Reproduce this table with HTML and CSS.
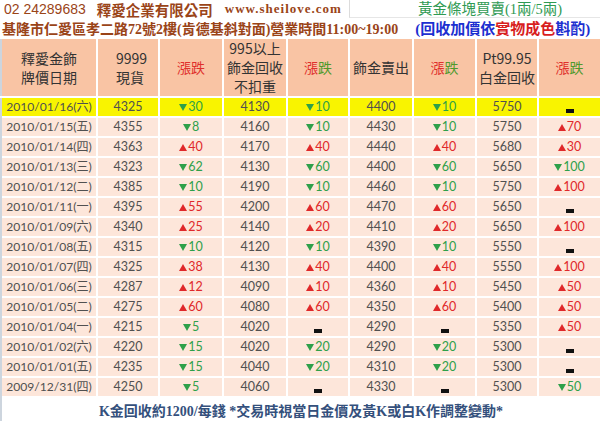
FILE: index.html
```html
<!DOCTYPE html>
<html lang="zh-Hant">
<head>
<meta charset="utf-8">
<title>釋愛企業有限公司 黃金牌價</title>
<link rel="stylesheet" href="styles.css">
</head>
<body>
<div class="page">
  <div class="line1">
    <div class="brand">
      <span class="phone">02 24289683</span>
      <span class="company">釋愛企業有限公司</span>
      <span class="url">www.sheilove.com</span>
    </div>
    <div class="trade">黃金條塊買賣(1兩/5兩)</div>
  </div>
  <div class="line2">
    <span class="addr">基隆市仁愛區孝二路72號2樓(肯德基斜對面)營業時間11:00~19:00</span>
    <span class="note">(回收加價依<em class="red">實物成色</em>斟酌)</span>
  </div>

  <div class="board">
    <div class="h">釋愛金飾<br>牌價日期</div>
    <div class="h h-left">9999<br>現貨</div>
    <div class="h"><span class="up-t">漲跌</span></div>
    <div class="h">995以上<br>飾金回收<br>不扣重</div>
    <div class="h"><span class="up-t">漲</span><span class="dn-t">跌</span></div>
    <div class="h">飾金賣出</div>
    <div class="h"><span class="up-t">漲</span><span class="dn-t">跌</span></div>
    <div class="h">Pt99.95<br>白金回收</div>
    <div class="h"><span class="up-t">漲</span><span class="dn-t">跌</span></div>
  </div>
  <div class="board" id="rows"></div>

  <div class="foot">K金回收約1200/每錢 *交易時視當日金價及黃K或白K作調整變動*</div>
</div>
<script src="app.js"></script>
</body>
</html>
```

FILE: app.js
```js
var data = [
  ["2010/01/16(六)","4325","d30","4130","d10","4400","d10","5750","-"],
  ["2010/01/15(五)","4355","d8","4160","d10","4430","d10","5750","u70"],
  ["2010/01/14(四)","4363","u40","4170","u40","4440","u40","5680","u30"],
  ["2010/01/13(三)","4323","d62","4130","d60","4400","d60","5650","d100"],
  ["2010/01/12(二)","4385","d10","4190","d10","4460","d10","5750","u100"],
  ["2010/01/11(一)","4395","u55","4200","u60","4470","u60","5650","-"],
  ["2010/01/09(六)","4340","u25","4140","u20","4410","u20","5650","u100"],
  ["2010/01/08(五)","4315","d10","4120","d10","4390","d10","5550","-"],
  ["2010/01/07(四)","4325","u38","4130","u40","4400","u40","5550","u100"],
  ["2010/01/06(三)","4287","u12","4090","u10","4360","u10","5450","u50"],
  ["2010/01/05(二)","4275","u60","4080","u60","4350","u60","5400","u50"],
  ["2010/01/04(一)","4215","d5","4020","-","4290","-","5350","u50"],
  ["2010/01/02(六)","4220","d15","4020","d20","4290","d20","5300","-"],
  ["2010/01/01(五)","4235","d15","4040","d20","4310","d20","5300","-"],
  ["2009/12/31(四)","4250","d5","4060","-","4330","-","5300","d50"]
];
var host = document.getElementById("rows");
var html = "";
data.forEach(function (r, i) {
  var cls = i === 0 ? "c hl" : "c";
  r.forEach(function (v, j) {
    var inner;
    if (j === 0) {
      inner = '<span class="date">' + v + '</span>';
    } else if (j % 2 === 0) {
      if (v === "-") {
        inner = '<span class="dash"></span>';
      } else if (v.charAt(0) === "u") {
        inner = '<span class="up"><i class="tri-up"></i>' + v.slice(1) + '</span>';
      } else {
        inner = '<span class="dn"><i class="tri-dn"></i>' + v.slice(1) + '</span>';
      }
    } else {
      inner = v;
    }
    html += '<div class="' + cls + '">' + inner + '</div>';
  });
});
host.innerHTML = html;
```

FILE: styles.css
```css
html, body {
  margin: 0;
  padding: 0;
  background: #ffffff;
}

.page {
  width: 600px;
  height: 421px;
  overflow: hidden;
  font-family: "Liberation Sans", "Noto Sans CJK TC", sans-serif;
}

.line1 {
  display: flex;
  height: 18px;
}

.brand {
  width: 349px;
  display: flex;
  align-items: center;
  color: #9a4418;
  white-space: nowrap;
}

.phone {
  font-family: "Liberation Sans", sans-serif;
  font-size: 14px;
  margin-left: 4px;
}

.company {
  font-family: "Liberation Serif", "Noto Sans CJK TC", serif;
  font-weight: bold;
  font-size: 14.5px;
  margin-left: 11px;
}

.url {
  font-family: "Liberation Serif", serif;
  font-weight: bold;
  font-size: 13px;
  letter-spacing: 1px;
  margin-left: 12px;
}

.trade {
  flex: 1;
  border-left: 1px solid #dcdcdc;
  border-bottom: 1px solid #e6e6e6;
  color: #2f9a52;
  font-family: "Liberation Serif", "Noto Sans CJK TC", serif;
  font-size: 14.5px;
  padding-left: 68px;
  line-height: 18px;
  white-space: nowrap;
}

.line2 {
  display: flex;
  align-items: center;
  height: 19px;
  white-space: nowrap;
  font-family: "Liberation Serif", "Noto Sans CJK TC", serif;
  font-weight: bold;
  font-size: 14px;
  margin-bottom: 2px;
}

.addr {
  color: #9a4418;
  margin-left: 2px;
}

.note {
  color: #1c2fd0;
  margin-left: 17px;
  font-size: 15px;
}

.note .red {
  font-style: normal;
  color: #d81e1e;
}

.board {
  display: grid;
  grid-template-columns: 94px 60px 62px 62px 60px 62px 61px 60px 61px;
  column-gap: 2px;
  row-gap: 2px;
  border-left: 2px solid #cdd5de;
}

#rows {
  margin-top: 2px;
  grid-auto-rows: 18px;
}

.h {
  background: #f9c4a4;
  height: 57px;
  display: flex;
  align-items: center;
  justify-content: center;
  text-align: center;
  font-family: "Noto Sans CJK TC", sans-serif;
  font-size: 14px;
  line-height: 19px;
  color: #333333;
}

.h-left {
  justify-content: flex-start;
  text-align: left;
  padding-left: 18px;
}

.up-t { color: #e0302c; }
.dn-t { color: #4f9a2c; }

.c {
  background: #fde6da;
  display: flex;
  align-items: center;
  justify-content: center;
  font-family: "Lato", "Noto Sans CJK TC", sans-serif;
  font-size: 12.5px;
  line-height: 18px;
  color: #505050;
  white-space: nowrap;
}

.c.hl {
  background: #f9f400;
}

.date {
  font-size: 12.1px;
}

.up { color: #e0282a; }
.dn { color: #2ea04a; }

.tri-up, .tri-dn {
  display: inline-block;
  width: 0;
  height: 0;
  border-left: 4px solid transparent;
  border-right: 4px solid transparent;
  margin-right: 1px;
}

.tri-up {
  border-bottom: 7px solid #e0282a;
}

.tri-dn {
  border-top: 7px solid #2ea04a;
}

.dash {
  display: inline-block;
  width: 8px;
  height: 4px;
  background: #111111;
  align-self: flex-end;
  margin-bottom: 3px;
}

.foot {
  border-left: 2px solid #cdd5de;
  height: 24px;
  display: flex;
  align-items: center;
  justify-content: center;
  font-family: "Liberation Serif", "Noto Sans CJK TC", serif;
  font-weight: bold;
  font-size: 14px;
  color: #34507c;
  white-space: nowrap;
  padding-top: 2px;
}
```
